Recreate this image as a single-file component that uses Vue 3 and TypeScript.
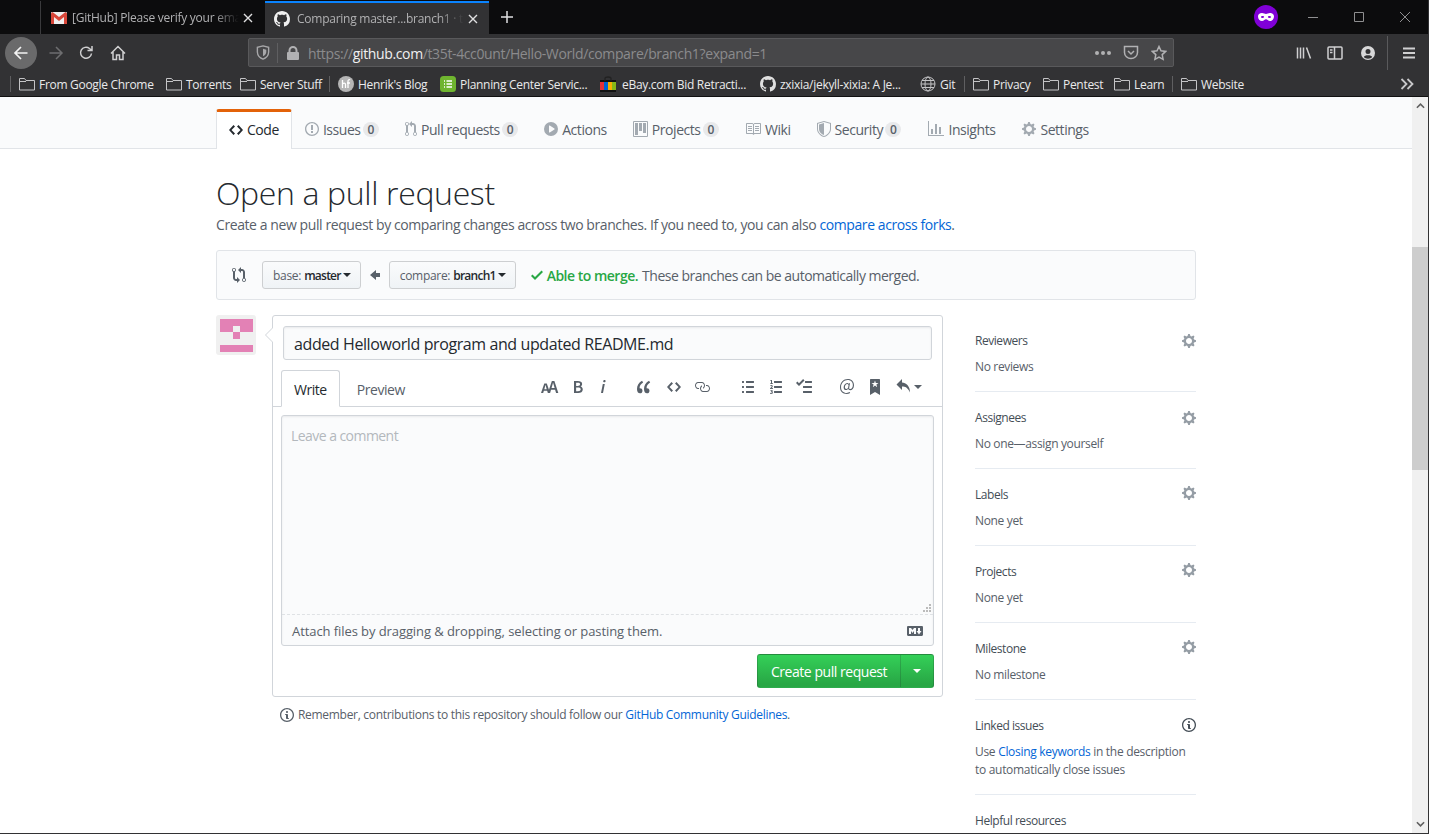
<script setup lang="ts">
import { h } from 'vue';

// octicon paths: [viewBox width, d]
const octicons: Record<string, [number, string]> = {
  code: [14, 'M9.5 3L8 4.5 11.5 8 8 11.5 9.5 13 14 8 9.5 3zm-5 0L0 8l4.5 5L6 11.5 2.5 8 6 4.5 4.5 3z'],
  issue: [14, 'M7 2.3c3.14 0 5.7 2.56 5.7 5.7s-2.56 5.7-5.7 5.7A5.71 5.71 0 0 1 1.3 8c0-3.14 2.56-5.7 5.7-5.7zM7 1C3.14 1 0 4.14 0 8s3.14 7 7 7 7-3.14 7-7-3.14-7-7-7zm1 3H6v5h2V4zm0 6H6v2h2v-2z'],
  pr: [12, 'M11 11.28V5c-.03-.78-.34-1.47-.94-2.06C9.46 2.35 8.78 2.03 8 2H7V0L4 3l3 3V4h1c.27.02.48.11.69.31.21.2.3.42.31.69v6.28A1.993 1.993 0 0 0 10 15a1.993 1.993 0 0 0 1-3.72zm-1 2.92c-.66 0-1.2-.55-1.2-1.2 0-.65.55-1.2 1.2-1.2.65 0 1.2.55 1.2 1.2 0 .65-.55 1.2-1.2 1.2zM4 3c0-1.11-.89-2-2-2a1.993 1.993 0 0 0-1 3.72v6.56A1.993 1.993 0 0 0 2 15a1.993 1.993 0 0 0 1-3.72V4.72c.59-.34 1-.98 1-1.72zm-.8 10c0 .66-.55 1.2-1.2 1.2-.65 0-1.2-.55-1.2-1.2 0-.65.55-1.2 1.2-1.2.65 0 1.2.55 1.2 1.2zM2 4.2C1.34 4.2.8 3.65.8 3c0-.65.55-1.2 1.2-1.2.65 0 1.2.55 1.2 1.2 0 .65-.55 1.2-1.2 1.2z'],
  play: [14, 'M14 8A7 7 0 1 1 0 8a7 7 0 0 1 14 0zm-8.223 3.482l4.599-3.066a.5.5 0 0 0 0-.832L5.777 4.518A.5.5 0 0 0 5 4.934v6.132a.5.5 0 0 0 .777.416z'],
  project: [15, 'M10 12h3V2h-3v10zm-4-2h3V2H6v8zm-4 4h3V2H2v12zm-1 1h13V1H1v14zM14 0H1a1 1 0 0 0-1 1v14a1 1 0 0 0 1 1h13a1 1 0 0 0 1-1V1a1 1 0 0 0-1-1z'],
  book: [16, 'M3 5h4v1H3V5zm0 3h4V7H3v1zm0 2h4V9H3v1zm11-5h-4v1h4V5zm0 2h-4v1h4V7zm0 2h-4v1h4V9zm2-6v9c0 .55-.45 1-1 1H9.5l-1 1-1-1H2c-.55 0-1-.45-1-1V3c0-.55.45-1 1-1h5.5l1 1 1-1H15c.55 0 1 .45 1 1zm-8 .5L7.5 3H2v9h6V3.5zm7-.5H9.5l-.5.5V12h6V3z'],
  shield: [14, 'M0 2l7-2 7 2v6.02C14 12.69 8.69 16 7 16c-1.69 0-7-3.31-7-7.98V2zm1 .75L7 1l6 1.75v5.268C13 12.104 8.449 15 7 15c-1.449 0-6-2.896-6-6.982V2.75zm1 .75L7 2v12c-1.207 0-5-2.482-5-5.985V3.5z'],
  graph: [16, 'M16 14v1H0V0h1v14h15zM5 13H3V8h2v5zm4 0H7V3h2v10zm4 0h-2V6h2v7z'],
  gear: [14, 'M14 8.77v-1.6l-1.94-.64-.45-1.09.88-1.84-1.13-1.13-1.81.91-1.09-.45-.69-1.92h-1.6l-.63 1.94-1.11.45-1.84-.88-1.13 1.13.91 1.81-.45 1.09L0 7.23v1.59l1.94.64.45 1.09-.88 1.84 1.13 1.13 1.81-.91 1.09.45.69 1.92h1.59l.63-1.94 1.11-.45 1.84.88 1.13-1.13-.92-1.81.47-1.09L14 8.75v.02zM7 11c-1.66 0-3-1.34-3-3s1.34-3 3-3 3 1.34 3 3-1.34 3-3 3z'],
  compare: [14, 'M5 12H4c-.27-.02-.48-.11-.69-.31-.21-.2-.3-.42-.31-.69V4.72A1.993 1.993 0 0 0 2 1a1.993 1.993 0 0 0-1 3.72V11c.03.78.34 1.47.94 2.06.6.59 1.28.91 2.06.94h1v2l3-3-3-3v2zM2 1.8c.66 0 1.2.55 1.2 1.2 0 .65-.55 1.2-1.2 1.2C1.35 4.2.8 3.65.8 3c0-.65.55-1.2 1.2-1.2zm11 9.48V5c-.03-.78-.34-1.47-.94-2.06-.6-.59-1.28-.91-2.06-.94H9V0L6 3l3 3V4h1c.27.02.48.11.69.31.21.2.3.42.31.69v6.28A1.993 1.993 0 0 0 12 15a1.993 1.993 0 0 0 1-3.72zm-1 2.92c-.66 0-1.2-.55-1.2-1.2 0-.65.55-1.2 1.2-1.2.65 0 1.2.55 1.2 1.2 0 .65-.55 1.2-1.2 1.2z'],
  arrowLeft: [10, 'M6 3L0 8l6 5v-3h4V6H6V3z'],
  check: [12, 'M12 5l-8 8-4-4 1.5-1.5L4 10l6.5-6.5L12 5z'],
  textSize: [18, 'M13.62 9.08L12.1 3.66h-.06l-1.5 5.42h3.08zM5.7 10.13S4.68 6.52 4.53 6.02h-.08l-1.13 4.11H5.7zM17.31 14h-2.25l-.95-3.25h-4.07L9.09 14H6.84l-.69-2.33H2.87L2.17 14H0l3.3-9.59h2.5l2.17 6.34L10.86 2h2.52l3.94 12h-.01z'],
  bold: [10, 'M1 2h3.83c2.48 0 4.3.75 4.3 2.95 0 1.14-.63 2.23-1.67 2.61v.06c1.33.3 2.3 1.23 2.3 2.86 0 2.39-1.97 3.52-4.61 3.52H1V2zm3.66 4.95c1.67 0 2.38-.66 2.38-1.69 0-1.17-.78-1.61-2.34-1.61H3.13v3.3h1.53zm.27 5.39c1.77 0 2.75-.64 2.75-1.98 0-1.27-.95-1.81-2.75-1.81h-1.8v3.8h1.8v-.01z'],
  italic: [6, 'M2.81 5h1.98L3 14H1l1.81-9zm.36-2.7c0-.7.58-1.3 1.33-1.3.56 0 1.13.38 1.13 1.03 0 .75-.59 1.3-1.33 1.3-.58 0-1.13-.38-1.13-1.03z'],
  quote: [14, 'M6.16 3.5C3.73 5.06 2.55 6.67 2.55 9.36c.16-.05.3-.05.44-.05 1.27 0 2.5.86 2.5 2.41 0 1.61-1.03 2.61-2.5 2.61-1.9 0-2.99-1.52-2.99-4.25 0-3.8 1.75-6.53 5.02-8.42L6.16 3.5zm7 0c-2.43 1.56-3.61 3.17-3.61 5.86.16-.05.3-.05.44-.05 1.27 0 2.5.86 2.5 2.41 0 1.61-1.03 2.61-2.5 2.61-1.89 0-2.98-1.52-2.98-4.25 0-3.8 1.75-6.53 5.02-8.42l1.14 1.84h-.01z'],
  link: [16, 'M4 9h1v1H4c-1.5 0-3-1.69-3-3.5S2.55 3 4 3h4c1.45 0 3 1.69 3 3.5 0 1.41-.91 2.72-2 3.25V8.59c.58-.45 1-1.27 1-2.09C10 5.22 8.98 4 8 4H4c-.98 0-2 1.22-2 2.5S3 9 4 9zm9-3h-1v1h1c1 0 2 1.22 2 2.5S13.98 12 13 12H9c-.98 0-2-1.22-2-2.5 0-.83.42-1.64 1-2.09V6.25c-1.09.53-2 1.84-2 3.25C6 11.31 7.55 13 9 13h4c1.45 0 3-1.69 3-3.5S14.5 6 13 6z'],
  listUl: [12, 'M2 13c0 .59 0 1-.59 1H.59C0 14 0 13.59 0 13c0-.59 0-1 .59-1h.81c.59 0 .59.41.59 1H2zm2.59-9h6.81c.59 0 .59-.41.59-1 0-.59 0-1-.59-1H4.59C4 2 4 2.41 4 3c0 .59 0 1 .59 1zM1.41 7H.59C0 7 0 7.41 0 8c0 .59 0 1 .59 1h.81c.59 0 .59-.41.59-1 0-.59 0-1-.59-1h.01zm0-5H.59C0 2 0 2.41 0 3c0 .59 0 1 .59 1h.81c.59 0 .59-.41.59-1 0-.59 0-1-.59-1h.01zm10 5H4.59C4 7 4 7.41 4 8c0 .59 0 1 .59 1h6.81c.59 0 .59-.41.59-1 0-.59 0-1-.59-1h.01zm0 5H4.59C4 12 4 12.41 4 13c0 .59 0 1 .59 1h6.81c.59 0 .59-.41.59-1 0-.59 0-1-.59-1h.01z'],
  listOl: [13, 'M12 13c0 .59 0 1-.59 1H4.59C4 14 4 13.59 4 13c0-.59 0-1 .59-1h6.81c.59 0 .59.41.59 1H12zM4.59 4h6.81c.59 0 .59-.41.59-1 0-.59 0-1-.59-1H4.59C4 2 4 2.41 4 3c0 .59 0 1 .59 1zm6.81 3H4.59C4 7 4 7.41 4 8c0 .59 0 1 .59 1h6.81c.59 0 .59-.41.59-1 0-.59 0-1-.59-1zM2 1h-.72c-.3.19-.58.25-1.03.34V2H1v2.14H.16V5H3v-.86H2V1zm.25 8.13c-.17 0-.45.03-.66.06.53-.56 1.14-1.25 1.14-1.89C2.71 6.52 2.17 6 1.37 6c-.59 0-.97.2-1.38.64l.58.58c.19-.19.38-.38.64-.38.28 0 .48.16.48.52 0 .53-.77 1.2-1.7 2.06V10h3l-.09-.88h-.66zm-.08 3.78v-.03c.44-.19.64-.47.64-.86 0-.7-.56-1.11-1.44-1.11-.48 0-.89.19-1.28.52l.55.64c.25-.2.44-.31.69-.31.27 0 .42.13.42.36 0 .27-.2.44-.86.44v.75c.83 0 .98.17.98.47 0 .25-.23.38-.58.38-.28 0-.56-.14-.81-.38l-.48.66c.3.36.77.56 1.41.56.83 0 1.53-.41 1.53-1.16-.02-.45-.25-.75-.77-.89z'],
  tasklist: [16, 'M15.41 9H7.59C7 9 7 8.59 7 8c0-.59 0-1 .59-1h7.81c.59 0 .59.41.59 1 0 .59 0 1-.59 1h.01zM9.59 4C9 4 9 3.59 9 3c0-.59 0-1 .59-1h5.81c.59 0 .59.41.59 1 0 .59 0 1-.59 1H9.59zM0 3.91l1.41-1.3L3 4.2 7.09 0 8.5 1.41 3 6.91l-3-3zM7.59 12h7.81c.59 0 .59.41.59 1 0 .59 0 1-.59 1H7.59C7 14 7 13.59 7 13c0-.59 0-1 .59-1z'],
  mention: [14, 'M6.58 15c1.25 0 2.52-.31 3.56-.94l-.42-.94c-.84.52-1.89.83-3.03.83-3.23 0-5.64-2.08-5.64-5.72 0-4.37 3.23-7.18 6.58-7.18 3.45 0 5.22 2.19 5.22 5.2 0 2.39-1.34 3.86-2.5 3.86-1.05 0-1.36-.73-1.05-2.19l.73-3.75H8.98l-.11.72c-.41-.63-.94-.83-1.56-.83-2.19 0-3.66 2.39-3.66 4.38 0 1.67.94 2.61 2.3 2.61.84 0 1.67-.53 2.3-1.25.11.94.94 1.45 1.98 1.45 1.67 0 3.77-1.67 3.77-5C14 2.61 11.59 0 7.83 0 3.66 0 0 3.33 0 8.33 0 12.71 2.92 15 6.58 15zm-.31-5c-.73 0-1.36-.52-1.36-1.67 0-1.45.94-3.22 2.41-3.22.52 0 .84.2 1.25.83l-.52 3.02c-.63.73-1.25 1.05-1.78 1.05V10z'],
  bookmark: [10, 'M9 0H1C.27 0 0 .27 0 1v15l5-3.09L10 16V1c0-.73-.27-1-1-1zm-.78 4.25L6.36 5.61l.72 2.16c.06.22-.02.28-.2.17L5 6.6 3.12 7.94c-.19.11-.25.05-.2-.17l.72-2.16-1.86-1.36c-.17-.16-.14-.23.09-.23l2.3-.03.7-2.16h.25l.7 2.16 2.3.03c.23 0 .27.08.09.23h.01z'],
  reply: [14, 'M6 3.5c3.92.44 8 3.125 8 10-2.312-5.062-4.75-6-8-6V11L.5 5.5 6 0v3.5z'],
  info: [14, 'M6.3 5.69a.942.942 0 0 1-.28-.7c0-.28.09-.52.28-.7.19-.18.42-.28.7-.28.28 0 .52.09.7.28.18.19.28.42.28.7 0 .28-.09.52-.28.7a1 1 0 0 1-.7.3c-.28 0-.52-.11-.7-.3zM8 7.99c-.02-.25-.11-.48-.31-.69-.2-.19-.42-.3-.69-.31H6c-.27.02-.48.13-.69.31-.2.2-.3.44-.31.69h1v3c.02.27.11.5.31.69.2.2.42.31.69.31h1c.27 0 .48-.11.69-.31.2-.19.3-.42.31-.69H8V7.98v.01zM7 2.3c-3.14 0-5.7 2.54-5.7 5.68 0 3.14 2.56 5.7 5.7 5.7s5.7-2.55 5.7-5.7c0-3.15-2.56-5.69-5.7-5.69v.01zM7 .98c3.86 0 7 3.14 7 7s-3.14 7-7 7-7-3.12-7-7 3.14-7 7-7z'],
  markdown: [16, 'M14.85 3H1.15C.52 3 0 3.52 0 4.15v7.69C0 12.48.52 13 1.15 13h13.69c.64 0 1.15-.52 1.15-1.15v-7.7C16 3.52 15.48 3 14.85 3zM9 11H7V8L5.5 9.92 4 8v3H2V5h2l1.5 2L7 5h2v6zm2.99.5L9.5 8H11V5h2v3h1.5l-2.51 3.5z'],
  github: [16, 'M8 0C3.58 0 0 3.58 0 8c0 3.54 2.29 6.53 5.47 7.59.4.07.55-.17.55-.38 0-.19-.01-.82-.01-1.49-2.01.37-2.53-.49-2.69-.94-.09-.23-.48-.94-.82-1.13-.28-.15-.68-.52-.01-.53.63-.01 1.08.58 1.23.82.72 1.21 1.87.87 2.33.66.07-.52.28-.87.51-1.07-1.78-.2-3.64-.89-3.64-3.95 0-.87.31-1.59.82-2.15-.08-.2-.36-1.02.08-2.12 0 0 .67-.21 2.2.82.64-.18 1.32-.27 2-.27.68 0 1.36.09 2 .27 1.53-1.04 2.2-.82 2.2-.82.44 1.1.16 1.92.08 2.12.51.56.82 1.27.82 2.15 0 3.07-1.87 3.75-3.65 3.95.29.25.54.73.54 1.48 0 1.07-.01 1.93-.01 2.2 0 .21.15.46.55.38A8.013 8.013 0 0 0 16 8c0-4.42-3.58-8-8-8z'],
};

const Octicon = (props: { name: string }) => {
  const [w, d] = octicons[props.name];
  return h('svg', { class: 'octicon', viewBox: `0 0 ${w} 16`, width: w, height: 16, fill: 'currentColor' }, [
    h('path', { d, 'fill-rule': 'evenodd' }),
  ]);
};
Octicon.props = ['name'];

type Bookmark = { label: string; icon: string; width: number; sep?: boolean };

const bookmarks: Bookmark[] = [
  { label: 'From Google Chrome', icon: 'folder', width: 115 },
  { label: 'Torrents', icon: 'folder', width: 42 },
  { label: 'Server Stuff', icon: 'folder', width: 60, sep: true },
  { label: "Henrik's Blog", icon: 'henrik', width: 70 },
  { label: 'Planning Center Servic...', icon: 'planning', width: 128 },
  { label: 'eBay.com Bid Retracti...', icon: 'ebay', width: 126 },
  { label: 'zxixia/jekyll-xixia: A Je...', icon: 'gh', width: 128 },
  { label: 'Git', icon: 'globe', width: 15, sep: true },
  { label: 'Privacy', icon: 'folder', width: 38 },
  { label: 'Pentest', icon: 'folder', width: 39 },
  { label: 'Learn', icon: 'folder', width: 29, sep: true },
  { label: 'Website', icon: 'folder', width: 42 },
];

const repoTabs = [
  { label: 'Code', icon: 'code', active: true },
  { label: 'Issues', icon: 'issue', count: 0 },
  { label: 'Pull requests', icon: 'pr', count: 0 },
  { label: 'Actions', icon: 'play' },
  { label: 'Projects', icon: 'project', count: 0 },
  { label: 'Wiki', icon: 'book' },
  { label: 'Security', icon: 'shield', count: 0 },
  { label: 'Insights', icon: 'graph' },
  { label: 'Settings', icon: 'gear' },
];

// ml = distance from the previous icon, the buttons aren't evenly spaced
const toolbarItems = [
  { icon: 'textSize', ml: 0 },
  { icon: 'bold', ml: 14 },
  { icon: 'italic', ml: 17 },
  { icon: 'quote', ml: 31 },
  { icon: 'code', ml: 16 },
  { icon: 'link', ml: 13 },
  { icon: 'listUl', ml: 32 },
  { icon: 'listOl', ml: 16 },
  { icon: 'tasklist', ml: 13 },
  { icon: 'mention', ml: 28 },
  { icon: 'bookmark', ml: 16 },
  { icon: 'reply', ml: 16 },
];

const sidebar = [
  { title: 'Reviewers', value: 'No reviews' },
  { title: 'Assignees', value: 'No one—assign yourself' },
  { title: 'Labels', value: 'None yet' },
  { title: 'Projects', value: 'None yet' },
  { title: 'Milestone', value: 'No milestone' },
];

const identicon = [
  [0, 0, 5, 2],
  [2, 1, 1, 2],
  [0, 4, 5, 1],
];
</script>

<template>
  <div class="window">
    <header class="tabbar">
      <div class="tab tab-inactive">
        <svg class="favicon" viewBox="0 0 16 12" width="16" height="12">
          <rect width="16" height="12" rx="1" fill="#f0f0f0" />
          <path d="M0 1.5V12h3V5l5 4 5-4v7h3V1.5L14.500 0 8 5 1.500 0z" fill="#d8473a" />
        </svg>
        <span class="tab-title">[GitHub] Please verify your ema</span>
        <svg class="tab-close" viewBox="0 0 10 10" width="10" height="10"><path d="M1 1l8 8M9 1l-8 8" /></svg>
      </div>
      <div class="tab tab-active">
        <Octicon name="github" class="tab-gh" />
        <span class="tab-title">Comparing master...branch1 · t</span>
        <svg class="tab-close" viewBox="0 0 10 10" width="10" height="10"><path d="M1 1l8 8M9 1l-8 8" /></svg>
      </div>
      <svg class="new-tab" viewBox="0 0 14 14" width="14" height="14"><path d="M7 1v12M1 7h12" /></svg>
      <div class="titlebar-right">
        <span class="private">
          <svg viewBox="0 0 16 8" width="16" height="8"><path fill="#fff" fill-rule="evenodd" d="M4 0c1.700 0 2.700 1 4 1s2.300-1 4-1c2.500 0 4 1.400 4 3.500C16 6 14.200 8 12 8 10 8 9.300 6.300 8 6.300S6 8 4 8C1.800 8 0 6 0 3.500 0 1.400 1.500 0 4 0zm.6 3C3.800 3 3 3.300 3 3.900s.8 1 1.600 1 1.500-.3 1.500-.9S5.400 3 4.600 3zm6.800 0c-.8 0-1.500.4-1.500 1s.7.900 1.500.9 1.600-.4 1.600-1S12.200 3 11.400 3z" /></svg>
        </span>
        <div class="win-controls">
          <svg viewBox="0 0 12 12" width="12" height="12"><path d="M1 6.500h10" /></svg>
          <svg viewBox="0 0 12 12" width="12" height="12"><path d="M1.500 1.500h9v9h-9z" /></svg>
          <svg viewBox="0 0 12 12" width="12" height="12"><path d="M1 1l10 10M11 1L1 11" /></svg>
        </div>
      </div>
    </header>

    <div class="navbar">
      <button class="back">
        <svg viewBox="0 0 16 16" width="16" height="16"><path d="M14.500 8H2M8 2L2 8l6 6" /></svg>
      </button>
      <svg class="nav-icon forward" viewBox="0 0 16 16" width="16" height="16"><path d="M1.500 8H14M8 2l6 6-6 6" /></svg>
      <svg class="nav-icon reload" viewBox="0 0 16 16" width="16" height="16"><path d="M13.500 8.500A5.500 5.500 0 1 1 11.500 3.500L14 5.500M14 1v4.500H9.500" /></svg>
      <svg class="nav-icon home" viewBox="0 0 16 16" width="16" height="16"><path d="M1 8.500L8 1.500l7 7M3 7v7.500h3.500V10h3v4.500H13V7" /></svg>
      <div class="urlbar">
        <svg class="url-shield" viewBox="0 0 14 16" width="14" height="15"><path d="M7 1l6 1.500v5C13 11 10 14 7 15 4 14 1 11 1 7.500v-5z" /><path class="solid" d="M7 4l3.500 1v2.500c0 2-1.500 3.500-3.500 4.500z" /></svg>
        <span class="url-divider"></span>
        <svg class="url-lock" viewBox="0 0 12 14" width="12" height="14"><path fill="#b1b1b3" fill-rule="evenodd" d="M1.500 6V4.500a4.500 4.500 0 0 1 9 0V6h.5a1 1 0 0 1 1 1v6a1 1 0 0 1-1 1H1a1 1 0 0 1-1-1V7a1 1 0 0 1 1-1zM3.500 6h5V4.500a2.500 2.500 0 0 0-5 0z" /></svg>
        <span class="url-text">https://<b>github.com</b>/t35t-4cc0unt/Hello-World/compare/branch1?expand=1</span>
        <span class="url-dots"><i></i><i></i><i></i></span>
        <svg class="url-pocket" viewBox="0 0 16 15" width="16" height="15"><path d="M1.500 1.500h13v6a6.500 6 0 0 1-13 0z" /><path d="M5 6l3 3 3-3" /></svg>
        <svg class="url-star" viewBox="0 0 16 16" width="16" height="16"><path d="M8 1.500l2 4.300 4.700.6-3.500 3.200.9 4.700L8 12l-4.100 2.300.9-4.700L1.300 6.400 6 5.800z" /></svg>
      </div>
      <div class="nav-right">
        <svg viewBox="0 0 16 16" width="16" height="16" class="nav-icon"><path d="M1.500 2.500v11M4.500 2.500v11M7.500 2.500v11M10.500 2.500l4 11" /></svg>
        <svg viewBox="0 0 16 14" width="16" height="14" class="nav-icon"><path d="M2 1h12a1 1 0 0 1 1 1v10a1 1 0 0 1-1 1H2a1 1 0 0 1-1-1V2a1 1 0 0 1 1-1zM7.500 1v12" /><path d="M3 4h2.500M3 6.500h2.500" /></svg>
        <svg viewBox="0 0 16 16" width="16" height="16" class="account"><path fill="#d7d7d8" fill-rule="evenodd" d="M8 1a7 7 0 1 1 0 14A7 7 0 0 1 8 1zm0 3a2.500 2.500 0 1 0 0 5 2.500 2.500 0 0 0 0-5zM3.800 12c1 1.100 2.500 1.700 4.200 1.700s3.200-.6 4.200-1.700c-.5-1.300-2-1.800-4.200-1.800S4.300 10.700 3.800 12z" /></svg>
        <span class="nav-sep"></span>
        <svg viewBox="0 0 14 12" width="14" height="12" class="nav-icon"><path d="M1 1.500h12M1 6h12M1 10.500h12" stroke-width="2" /></svg>
      </div>
    </div>

    <div class="bookmarks">
      <span class="bm-sep bm-sep-first"></span>
      <template v-for="b in bookmarks" :key="b.label">
        <span class="bookmark">
          <svg v-if="b.icon === 'folder'" class="bm-icon" viewBox="0 0 16 14" width="16" height="14"><path d="M.5 13V1.500h5l1.500 2h8.500V13z M.5 4.500H7" fill="none" stroke="#c4c4c6" /></svg>
          <svg v-else-if="b.icon === 'henrik'" class="bm-icon" viewBox="0 0 16 16" width="16" height="16"><circle cx="8" cy="8" r="8" fill="#b5b5b5" /><path d="M4.500 4v8M4.500 8c2-2 3 0 3 0v4M10 12V5c0-1.500 1.500-1.500 2-1M9 7h3" stroke="#fff" stroke-width="1.300" fill="none" /></svg>
          <svg v-else-if="b.icon === 'planning'" class="bm-icon" viewBox="0 0 16 16" width="16" height="16"><rect width="16" height="16" rx="3.500" fill="#6fb52f" /><path d="M4 5h1M4 8h1M4 11h1M6.500 5H12M6.500 8H12M6.500 11H12" stroke="#fff" stroke-width="1.300" /></svg>
          <svg v-else-if="b.icon === 'ebay'" class="bm-icon bm-ebay" viewBox="0 0 16 16" width="16" height="16"><rect x="0" y="4" width="16" height="12" fill="#111" /><path d="M5 5V2.500C5 1.500 6 1 8 1s3 .5 3 1.500V5" stroke="#222" fill="none" stroke-width="1.300" /><rect y="6" width="4" height="8" fill="#e53238" /><rect x="4" y="6" width="4" height="8" fill="#0064d2" /><rect x="8" y="6" width="4" height="8" fill="#f5af02" /><rect x="12" y="6" width="4" height="8" fill="#86b817" /></svg>
          <Octicon v-else-if="b.icon === 'gh'" name="github" class="bm-gh" />
          <svg v-else class="bm-icon" viewBox="0 0 16 16" width="16" height="16"><g fill="none" stroke="#c4c4c6"><circle cx="8" cy="8" r="7" /><ellipse cx="8" cy="8" rx="3" ry="7" /><path d="M1 8h14M2 4.500h12M2 11.500h12" /></g></svg>
          <span class="bm-label" :style="{ width: b.width + 'px' }">{{ b.label }}</span>
        </span>
        <span v-if="b.sep" class="bm-sep"></span>
      </template>
      <svg class="bm-more" viewBox="0 0 14 12" width="14" height="12"><path d="M1.500 1l5 5-5 5M7.500 1l5 5-5 5" /></svg>
    </div>

    <div class="viewport">
      <main class="page">
        <nav class="repo-nav">
          <div class="container repo-tabs">
            <a v-for="t in repoTabs" :key="t.label" class="repo-tab" :class="{ active: t.active }">
              <Octicon :name="t.icon" />
              <span>{{ t.label }}</span>
              <span v-if="t.count !== undefined" class="counter">{{ t.count }}</span>
            </a>
          </div>
        </nav>

        <div class="container">
          <h1 class="title">Open a pull request</h1>
          <p class="lead">Create a new pull request by comparing changes across two branches. If you need to, you can also <a>compare across forks</a>.</p>

          <div class="range">
            <Octicon name="compare" class="range-icon" />
            <button class="select">base: <b>master</b><i class="caret"></i></button>
            <Octicon name="arrowLeft" class="range-arrow" />
            <button class="select">compare: <b>branch1</b><i class="caret"></i></button>
            <span class="merge">
              <Octicon name="check" />
              <strong>Able to merge.</strong>
              <span>These branches can be automatically merged.</span>
            </span>
          </div>

          <div class="columns">
            <div class="discussion">
              <div class="composer-row">
                <div class="avatar">
                  <svg viewBox="0 0 5 5" width="33" height="33" shape-rendering="crispEdges">
                    <rect v-for="(r, i) in identicon" :key="i" :x="r[0]" :y="r[1]" :width="r[2]" :height="r[3]" fill="#e381b5" />
                    <rect x="2" y="1" width="1" height="1" fill="#f0f0f0" />
                  </svg>
                </div>
                <div class="composer">
                  <div class="title-input">added Helloworld program and updated README.md</div>
                  <div class="editor-head">
                    <span class="edit-tab selected">Write</span>
                    <span class="edit-tab">Preview</span>
                    <div class="md-toolbar">
                      <span v-for="item in toolbarItems" :key="item.icon" class="md-btn" :style="{ marginLeft: item.ml + 'px' }">
                        <Octicon :name="item.icon" />
                        <i v-if="item.icon === 'reply'" class="caret"></i>
                      </span>
                    </div>
                  </div>
                  <div class="editor">
                    <div class="editor-input">Leave a comment</div>
                    <svg class="grip" viewBox="0 0 9 9" width="9" height="9"><path d="M7 1h2v2H7zM4 4h2v2H4zM7 4h2v2H7zM1 7h2v2H1zM4 7h2v2H4zM7 7h2v2H7z" fill="#bbb" /></svg>
                    <div class="attach">
                      <span>Attach files by dragging &amp; dropping, selecting or pasting them.</span>
                      <Octicon name="markdown" />
                    </div>
                  </div>
                  <div class="actions">
                    <div class="create">
                      <button class="create-main">Create pull request</button>
                      <button class="create-more"><i class="caret"></i></button>
                    </div>
                  </div>
                </div>
              </div>
              <p class="remember">
                <Octicon name="info" />
                <span>Remember, contributions to this repository should follow our <a>GitHub Community Guidelines</a>.</span>
              </p>
            </div>

            <aside class="sidebar">
              <section v-for="s in sidebar" :key="s.title" class="side-item">
                <div class="side-head">
                  <span>{{ s.title }}</span>
                  <Octicon name="gear" class="side-gear" />
                </div>
                <div class="side-value">{{ s.value }}</div>
              </section>
              <section class="side-item linked">
                <div class="side-head">
                  <span>Linked issues</span>
                  <Octicon name="info" class="side-info" />
                </div>
                <div class="side-text">Use <a>Closing keywords</a> in the description<br />to automatically close issues</div>
              </section>
              <section class="side-item last">
                <div class="side-head"><span>Helpful resources</span></div>
              </section>
            </aside>
          </div>
        </div>
      </main>

      <div class="scrollbar">
        <svg viewBox="0 0 10 6" width="9" height="6"><path d="M1 5l4-4 4 4" /></svg>
        <div class="scroll-track"><div class="scroll-thumb"></div></div>
        <svg viewBox="0 0 10 6" width="9" height="6"><path d="M1 1l4 4 4-4" /></svg>
      </div>
    </div>
  </div>
</template>

<style>
html,
body {
  margin: 0;
  height: 100%;
  overflow: hidden;
  background: #323234;
}
</style>

<style scoped>
.window {
  width: 1429px;
  height: 834px;
  display: flex;
  flex-direction: column;
  overflow: hidden;
  font-family: 'Open Sans', 'Noto Sans', sans-serif;
  box-sizing: border-box;
  border-right: 1px solid #323234;
  border-bottom: 1px solid #323234;
}
button {
  font-family: inherit;
}
a {
  color: #0366d6;
}
.octicon {
  display: block;
  flex: none;
}

/* browser chrome */
.tabbar {
  height: 34px;
  flex: none;
  background: #0c0c0d;
  display: flex;
  align-items: stretch;
  padding-left: 40px;
  color: #b1b1b3;
  font-size: 12px;
  letter-spacing: -0.25px;
}
.tab {
  width: 225px;
  box-sizing: border-box;
  display: flex;
  align-items: center;
  padding: 0 12px 0 10px;
}
.tab-inactive {
  border-left: 1px solid #3a3a3c;
  margin-top: 1px;
}
.tab-active {
  background: #323234;
  border-top: 2px solid #0a84ff;
  margin-top: 1px;
  width: 224px;
  padding: 0 11px 0 9px;
}
.favicon {
  flex: none;
}
.tab-gh {
  color: #f0f0f0;
}
.tab-title {
  flex: 1;
  min-width: 0;
  margin: 0 4px 0 7px;
  white-space: nowrap;
  -webkit-mask-image: linear-gradient(to right, #000 85%, transparent);
  mask-image: linear-gradient(to right, #000 85%, transparent);
}
.tab-inactive .tab-title {
  margin-left: 5px;
}
.tab-close {
  flex: none;
  stroke: #e0e0e1;
  stroke-width: 1.400;
  fill: none;
}
.new-tab {
  align-self: center;
  margin-left: 11px;
  stroke: #e0e0e1;
  stroke-width: 1.500;
  fill: none;
}
.titlebar-right {
  margin-left: auto;
  display: flex;
  align-items: center;
}
.private {
  width: 24px;
  height: 24px;
  border-radius: 50%;
  background: #8000d7;
  display: flex;
  align-items: center;
  justify-content: center;
}
.win-controls {
  display: flex;
  align-items: center;
  gap: 34px;
  margin-left: 29px;
  margin-right: 17px;
}
.win-controls svg {
  stroke: #8f8f90;
  fill: none;
}
.navbar {
  height: 37px;
  flex: none;
  background: #323234;
  display: flex;
  align-items: center;
  padding-left: 5px;
}
.nav-icon,
.url-shield,
.url-pocket,
.url-star {
  stroke: #d0d0d1;
  stroke-width: 1.500;
  fill: none;
  flex: none;
}
.back {
  width: 32px;
  height: 32px;
  border-radius: 50%;
  border: 0;
  padding: 0;
  background: #6a6a6b;
  display: flex;
  align-items: center;
  justify-content: center;
  flex: none;
}
.back svg {
  stroke: #f4f4f4;
  stroke-width: 1.700;
  fill: none;
}
.forward {
  margin-left: 11px;
  stroke: #6e6e70;
}
.reload {
  margin-left: 14px;
}
.home {
  margin-left: 16px;
}
.urlbar {
  margin-left: 122px;
  width: 926px;
  height: 29px;
  box-sizing: border-box;
  background: #474749;
  border: 1px solid #59595b;
  border-radius: 2px;
  display: flex;
  align-items: center;
  padding: 0 6px 0 7px;
  flex: none;
}
.url-shield {
  stroke: #a8a8aa;
}
.url-shield .solid {
  fill: #a8a8aa;
  stroke: none;
}
.url-divider {
  width: 1px;
  height: 20px;
  background: #5f5f61;
  margin: 0 9px 0 7px;
}
.url-text {
  margin-left: 9px;
  padding-top: 2px;
  font-size: 14px;
  letter-spacing: -0.37px;
  color: #8b8b8d;
  white-space: nowrap;
}
.url-text b {
  font-weight: 400;
  color: #f0f0f1;
}
.url-dots {
  margin-left: auto;
  display: flex;
  gap: 2px;
}
.url-dots i {
  width: 4px;
  height: 4px;
  border-radius: 50%;
  background: #b1b1b3;
}
.url-pocket {
  margin-left: 12px;
  stroke: #b1b1b3;
}
.url-star {
  margin-left: 12px;
  stroke: #b1b1b3;
}
.nav-right {
  display: flex;
  align-items: center;
  margin-left: 122px;
}
.nav-right .nav-icon {
  stroke: #d0d0d1;
}
.nav-right > svg:nth-child(2) {
  margin-left: 15px;
}
.account {
  margin-left: 17px;
  flex: none;
}
.nav-sep {
  width: 1px;
  height: 34px;
  background: #5a5a5c;
  margin: 0 14px 0 11px;
}
.bookmarks {
  height: 26px;
  flex: none;
  box-sizing: border-box;
  padding: 1px 0 0 10px;
  background: #323234;
  border-bottom: 1px solid #111;
  display: flex;
  align-items: center;
  color: #eaeaeb;
  font-size: 12px;
  letter-spacing: -0.3px;
}
.bookmark {
  display: flex;
  align-items: center;
  gap: 4px;
  margin-right: 12px;
}
.bm-icon,
.bm-gh {
  flex: none;
}
.bm-ebay {
  margin-right: 2px;
}
.bm-gh {
  color: #e0e0e0;
}
.bm-label {
  white-space: nowrap;
}
.bm-sep {
  width: 1px;
  height: 16px;
  background: #5f5f61;
  margin-right: 8px;
  margin-left: -3px;
}
.bm-sep-first {
  margin-left: 0;
}
.bm-more {
  margin-left: auto;
  margin-right: 14px;
  stroke: #c8c8ca;
  stroke-width: 1.800;
  fill: none;
}

/* page */
.viewport {
  flex: 1;
  min-height: 0;
  display: flex;
  background: #fff;
}
.page {
  flex: 1;
  min-width: 0;
  overflow: hidden;
  color: #24292e;
  font-size: 14px;
  letter-spacing: -0.45px;
}
.container {
  width: 980px;
  margin-left: 216px;
}
.repo-nav {
  background: #fafbfc;
  border-bottom: 1px solid #e1e4e8;
  height: 52px;
  box-sizing: border-box;
  padding-top: 12px;
}
.repo-tabs {
  display: flex;
  align-items: stretch;
}
.repo-tab {
  display: flex;
  align-items: center;
  gap: 4px;
  height: 40px;
  box-sizing: border-box;
  padding: 0 13px;
  color: #586069;
  white-space: nowrap;
}
.repo-tab:nth-child(n + 8) {
  margin-left: 1px;
}
.repo-tab .octicon {
  color: #a3aab1;
}
.repo-tab.active {
  background: #fff;
  color: #24292e;
  border: 1px solid #e1e4e8;
  border-top: 3px solid #e36209;
  border-bottom: 0;
  border-radius: 3px 3px 0 0;
  padding: 0 12px 2px;
}
.repo-tab.active .octicon {
  color: #24292e;
}
.counter {
  display: inline-block;
  padding: 0 5px;
  margin-left: -2px;
  background: rgba(27, 31, 35, 0.08);
  border-radius: 20px;
  font-size: 12px;
  line-height: 15px;
  font-weight: 600;
  color: #586069;
}
.title {
  margin: 24px 0 0;
  font-size: 32px;
  font-weight: 300;
  line-height: 40px;
  letter-spacing: -0.35px;
}
.lead {
  margin: 1px 0 0;
  line-height: 22px;
  color: #586069;
  letter-spacing: -0.415px;
}
.range {
  margin-top: 14px;
  height: 50px;
  box-sizing: border-box;
  background: #fafbfc;
  border: 1px solid #e1e4e8;
  border-radius: 3px;
  display: flex;
  align-items: center;
  padding-left: 15px;
}
.range-icon {
  color: #586069;
}
.select {
  height: 28px;
  padding: 0 9px 0 10px;
  background: linear-gradient(#fafbfc, #eff3f6);
  border: 1px solid #cdcfd1;
  border-radius: 3px;
  font-size: 12px;
  letter-spacing: -0.3px;
  color: #586069;
  display: flex;
  align-items: center;
  white-space: nowrap;
}
.range-icon + .select {
  margin-left: 16px;
}
.select b {
  margin-left: 3px;
  font-weight: 600;
  color: #24292e;
  letter-spacing: -0.75px;
}
.caret {
  display: inline-block;
  width: 0;
  height: 0;
  margin-left: 4px;
  border: 4px solid transparent;
  border-top-color: currentColor;
  border-bottom: 0;
}
.select .caret {
  color: #24292e;
  margin-left: 2px;
}
.range-arrow {
  color: #586069;
  margin: 0 9px;
}
.merge {
  margin-left: 15px;
  display: flex;
  align-items: center;
  gap: 4px;
  color: #586069;
  letter-spacing: -0.5px;
}
.merge .octicon {
  color: #28a745;
}
.merge strong {
  color: #28a745;
  font-weight: 600;
  letter-spacing: -0.5px;
}
.columns {
  margin-top: 15px;
  display: flex;
}
.discussion {
  width: 727px;
  flex: none;
}
.composer-row {
  display: flex;
  gap: 16px;
}
.avatar {
  width: 40px;
  height: 40px;
  flex: none;
  background: #f0f0f0;
  border-radius: 3px;
  display: flex;
  align-items: center;
  justify-content: center;
}
.composer {
  position: relative;
  flex: 1;
  height: 382px;
  box-sizing: border-box;
  background: #fff;
  border: 1px solid #d1d5da;
  border-radius: 3px;
  padding: 10px 8px 0;
}
.composer::before,
.composer::after {
  content: '';
  position: absolute;
  top: 11px;
  width: 0;
  height: 0;
  border: 8px solid transparent;
  border-left: 0;
}
.composer::before {
  left: -8px;
  border-right-color: #d1d5da;
}
.composer::after {
  left: -7px;
  border-right-color: #fff;
}
.title-input {
  height: 34px;
  box-sizing: border-box;
  margin: 0 2px;
  padding: 0 10px;
  width: 649px;
  background: #fafbfc;
  border: 1px solid #d1d5da;
  border-radius: 3px;
  box-shadow: inset 0 1px 2px rgba(27, 31, 35, 0.075);
  font-size: 16px;
  letter-spacing: -0.4px;
  line-height: 34px;
  color: #24292e;
  white-space: nowrap;
}
.editor-head {
  position: relative;
  margin: 10px -8px 0;
  height: 37px;
  box-sizing: border-box;
  padding-left: 8px;
  border-bottom: 1px solid #d1d5da;
  display: flex;
  align-items: flex-end;
}
.edit-tab {
  height: 37px;
  box-sizing: border-box;
  padding: 0 12px;
  line-height: 37px;
  color: #586069;
  margin-bottom: -1px;
  border: 1px solid transparent;
}
.edit-tab + .edit-tab {
  margin-left: 4px;
}
.edit-tab.selected {
  color: #24292e;
  background: #fff;
  border-color: #d1d5da;
  border-bottom-color: #fff;
  border-radius: 3px 3px 0 0;
}
.md-toolbar {
  margin-left: auto;
  margin-right: 20px;
  margin-bottom: 3px;
  display: flex;
  align-items: center;
  align-self: center;
}
.md-btn {
  display: flex;
  align-items: center;
  color: #586069;
}
.md-btn .caret {
  margin-left: 4px;
}
.editor {
  position: relative;
  margin-top: 8px;
  height: 231px;
  width: 653px;
  box-sizing: border-box;
  background: #fafbfc;
  border: 1px solid #d1d5da;
  border-radius: 3px;
  box-shadow: inset 0 1px 2px rgba(27, 31, 35, 0.075);
  display: flex;
  flex-direction: column;
}
.editor-input {
  flex: 1;
  padding: 10px 9px;
  color: #b3b8bd;
  letter-spacing: -0.55px;
  border-bottom: 1px dashed #dfe2e5;
}
.grip {
  position: absolute;
  right: 2px;
  bottom: 33px;
}
.attach {
  height: 30px;
  display: flex;
  align-items: center;
  justify-content: space-between;
  padding: 2px 10px 0 10px;
  box-sizing: border-box;
  font-size: 13px;
  letter-spacing: -0.08px;
  color: #586069;
}
.attach .octicon {
  color: #586069;
}
.actions {
  display: flex;
  justify-content: flex-end;
  margin-top: 8px;
  margin-right: 0;
  width: 653px;
}
.create {
  display: flex;
}
.create button {
  height: 34px;
  border: 1px solid rgba(27, 31, 35, 0.2);
  background: linear-gradient(#34d058, #28a745 90%);
  color: #fff;
  font-size: 14px;
  letter-spacing: -0.45px;
  font-weight: 500;
}
.create-main {
  width: 143px;
  border-radius: 3px 0 0 3px;
  border-right: 0 !important;
  padding: 0;
}
.create-more {
  width: 34px;
  border-radius: 0 3px 3px 0;
  display: flex;
  align-items: center;
  justify-content: center;
  padding: 0;
}
.create-more .caret {
  margin-left: 0;
}
.remember {
  margin: 9px 0 0 64px;
  display: flex;
  align-items: center;
  gap: 4px;
  font-size: 12px;
  letter-spacing: -0.3px;
  color: #586069;
}
.sidebar {
  margin-left: 32px;
  width: 221px;
  flex: none;
}
.side-item {
  height: 77px;
  box-sizing: border-box;
  border-bottom: 1px solid #e6ebf1;
  padding-top: 16px;
  font-size: 12px;
  letter-spacing: -0.35px;
  color: #586069;
}
.side-head {
  display: flex;
  align-items: center;
  justify-content: space-between;
  height: 18px;
  color: #444d56;
  font-weight: 500;
  letter-spacing: -0.45px;
}
.side-gear {
  color: #959da5;
  margin-bottom: 2px;
}
.side-item:nth-child(-n + 2) .side-gear {
  margin-bottom: 0;
  margin-top: 2px;
}
.side-info {
  color: #444d56;
}
.side-value {
  margin-top: 9px;
  line-height: 18px;
}
.linked {
  height: 95px;
}
.side-text {
  margin-top: 9px;
  line-height: 18px;
  letter-spacing: -0.3px;
}
.last {
  border-bottom: 0;
}

.scrollbar {
  width: 16px;
  flex: none;
  background: #f0f0f0;
  display: flex;
  flex-direction: column;
  align-items: center;
  padding: 6px 0;
  box-sizing: border-box;
}
.scrollbar svg {
  flex: none;
  stroke: #606060;
  stroke-width: 1.800;
  fill: none;
}
.scroll-track {
  flex: 1;
  align-self: stretch;
  padding-top: 138px;
}
.scroll-thumb {
  height: 223px;
  background: #cdcdcd;
}
</style>
